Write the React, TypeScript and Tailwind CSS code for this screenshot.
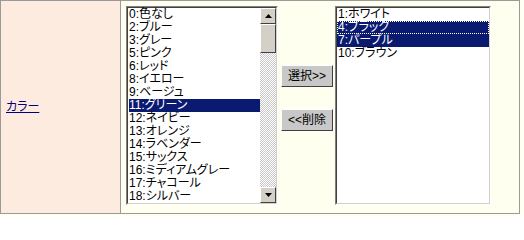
import React from 'react'

const left = [
  '0:色なし', '2:ブルー', '3:グレー', '5:ピンク', '6:レッド', '8:イエロー', '9:ベージュ',
  '11:グリーン', '12:ネイビー', '13:オレンジ', '14:ラベンダー', '15:サックス',
  '16:ミディアムグレー', '17:チャコール', '18:シルバー',
]
const right = ['1:ホワイト', '4:ブラック', '7:パープル', '10:ブラウン']

const font = "font-['Liberation_Sans','Noto_Sans_CJK_JP',sans-serif] [font-feature-settings:'palt'] text-[12px] leading-[13px]"

function ScrollBtn({ up }: { up?: boolean }) {
  return (
    <div className="w-[16px] h-[16px] bg-[#d4d0c8] border border-t-white border-l-white border-r-[#404040] border-b-[#404040] flex items-center justify-center">
      <svg width="7" height="4" viewBox="0 0 7 4">
        <path d={up ? 'M3.5 0 L7 4 L0 4 Z' : 'M0 0 L7 0 L3.5 4 Z'} fill="#000" />
      </svg>
    </div>
  )
}

function Sunken({ children, w }: { children: React.ReactNode; w: string }) {
  return (
    <div className={`${w} h-[199px] border border-t-[#808080] border-l-[#808080] border-r-white border-b-white`}>
      <div className="h-full border border-t-[#404040] border-l-[#404040] border-r-[#d4d0c8] border-b-[#d4d0c8] bg-white flex">
        {children}
      </div>
    </div>
  )
}

function Button({ label }: { label: string }) {
  return (
    <button className={`w-[52px] h-[22px] bg-[#c8c8c8] border border-t-white border-l-white border-r-[#404040] border-b-[#404040] text-black ${font} flex items-center justify-center`}>
      {label}
    </button>
  )
}

export default function App() {
  return (
    <div className="w-[524px] h-[217px] bg-[#fffff4]">
      <div className="w-[520px] h-[214px] flex border border-[#9a9a9a]">
        <div className="w-[119px] bg-[#fdebe0] flex items-center pl-[5px]">
          <a href="#" className={`text-[#000080] underline ${font}`}>カラー</a>
        </div>
        <div className="w-px bg-[#9a9a9a]" />
        <div className="flex-1 bg-[#fffff0] flex pl-[5px] pt-[5px] gap-[3px]">
          <Sunken w="w-[152px]">
            <div className={`flex-1 ${font} pl-px`}>
              {left.map(t => (
                <div
                  key={t}
                  className={t === '11:グリーン' ? 'bg-[#0a1a70] text-white' : 'text-black'}
                >
                  {t}
                </div>
              ))}
            </div>
            <div className="w-[16px] flex flex-col bg-[repeating-conic-gradient(#c8c8c8_0_25%,#ffffff_0_50%)] bg-[length:2px_2px]">
              <ScrollBtn up />
              <div className="h-[29px] bg-[#d4d0c8] border border-t-white border-l-white border-r-[#404040] border-b-[#404040]" />
              <div className="flex-1" />
              <ScrollBtn />
            </div>
          </Sunken>
          <div className="flex flex-col gap-[22px] pt-[59px]">
            <Button label="選択>>" />
            <Button label="<<削除" />
          </div>
          <div className="ml-[-1px]">
            <Sunken w="w-[156px]">
              <div className={`flex-1 ${font}`}>
                {right.map((t, i) => (
                  <div
                    key={t}
                    className={
                      i === 1
                        ? 'bg-[#0a1a70] text-white outline-1 outline-dotted outline-[#fffff0] -outline-offset-1 pl-px'
                        : i === 2
                        ? 'bg-[#0a1a70] text-white pl-px'
                        : 'text-black pl-px'
                    }
                  >
                    {t}
                  </div>
                ))}
              </div>
            </Sunken>
          </div>
        </div>
      </div>
    </div>
  )
}
